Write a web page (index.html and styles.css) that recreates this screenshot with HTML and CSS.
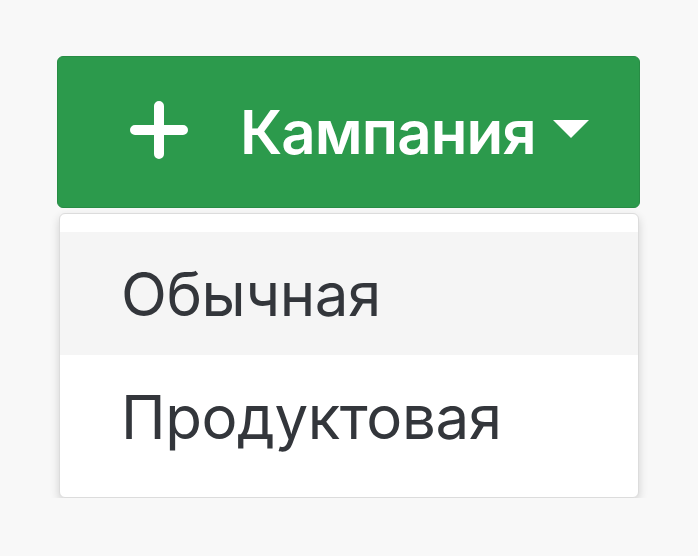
FILE: index.html
```html
<!DOCTYPE html>
<html lang="ru">
<head>
<meta charset="utf-8">
<link rel="stylesheet" href="styles.css">
</head>
<body>
<div class="dropdown">
  <button class="btn">
    <svg class="plus" viewBox="0 0 58 58" width="58" height="58"><path d="M29 5V53M5 29H53" stroke="#fff" stroke-width="10" stroke-linecap="round" fill="none"/></svg>
    <span class="label">Кампания</span>
    <svg class="caret" viewBox="0 0 36 18" width="36" height="18"><polygon points="0,0 36,0 18,18" fill="#fff"/></svg>
  </button>
  <ul class="menu">
    <li class="item active">Обычная</li>
    <li class="item">Продуктовая</li>
  </ul>
</div>
</body>
</html>
```
FILE: styles.css
```css
html, body {
  margin: 0;
  padding: 0;
  background: #f8f8f8;
}
body {
  font-family: "Inter", "Noto Sans", sans-serif;
}
.dropdown {
  display: flex;
  flex-direction: column;
  align-items: flex-start;
  padding: 56px 0 0 57px;
}
.btn {
  display: flex;
  align-items: center;
  box-sizing: border-box;
  width: 583px;
  height: 152px;
  padding: 0 0 0 72px;
  margin: 0;
  background: #2c9a4c;
  border: 1px solid #288c45;
  border-radius: 6px;
  color: #fff;
  font-family: inherit;
  font-size: 60px;
  font-weight: 600;
  letter-spacing: -0.9px;
  cursor: pointer;
}
.plus {
  flex: none;
  margin-top: -4px;
}
.label {
  margin-left: 52px;
  line-height: 1;
}
.caret {
  flex: none;
  margin-left: 17px;
  margin-top: -6px;
}
.menu {
  list-style: none;
  box-sizing: border-box;
  width: 580px;
  margin: 5px 0 0 2px;
  padding: 18px 0 19px;
  background: #fff;
  border: 1px solid #dcdcdc;
  border-radius: 6px;
  box-shadow: 0 4px 10px rgba(0, 0, 0, 0.16);
}
.item {
  display: flex;
  align-items: center;
  height: 123px;
  padding-left: 61px;
  font-size: 60px;
  letter-spacing: -0.4px;
  color: #33363b;
}
.item.active {
  background: #f5f5f5;
}
```
